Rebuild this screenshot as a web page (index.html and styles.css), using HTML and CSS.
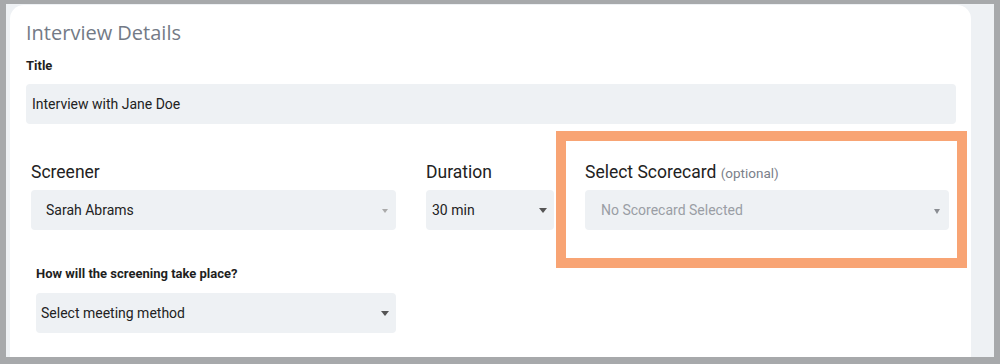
FILE: index.html
```html
<!DOCTYPE html>
<html lang="en">
<head>
    <meta charset="UTF-8">
    <meta name="viewport" content="width=device-width, initial-scale=1.0">
    <title>Interview Details</title>
    <link rel="stylesheet" href="styles.css">
</head>
<body>
    <div class="frame">
        <div class="card">
            <h2 class="card-title">Interview Details</h2>

            <label class="field-label">Title</label>
            <div class="input">Interview with Jane Doe</div>

            <div class="row">
                <div class="col">
                    <label class="big-label">Screener</label>
                    <div class="select screener">Sarah Abrams<span class="caret light"></span></div>
                </div>
                <div class="col">
                    <label class="big-label">Duration</label>
                    <div class="select duration">30 min<span class="caret"></span></div>
                </div>
                <div class="col">
                    <label class="big-label">Select Scorecard <span class="optional">(optional)</span></label>
                    <div class="select scorecard">No Scorecard Selected<span class="caret mid"></span></div>
                </div>
            </div>

            <div class="method">
                <label class="field-label">How will the screening take place?</label>
                <div class="select meeting">Select meeting method<span class="caret"></span></div>
            </div>
        </div>
        <div class="highlight"></div>
    </div>
</body>
</html>
```

FILE: styles.css
```css
body {
    margin: 0;
    background-color: #a7a9ab;
    font-family: Roboto, "Liberation Sans", Arial, sans-serif;
    color: #222;
}
.frame {
    position: relative;
    margin: 4px 6px 6px 6px;
    height: 353px;
    padding: 1px 23px 0 4px;
    box-sizing: border-box;
    background-color: #eef1f4;
    overflow: hidden;
}
.card {
    background-color: white;
    border-radius: 14px 14px 0 0;
    height: 100%;
    padding: 16px 15px 0 16px;
    box-sizing: border-box;
}
.card-title {
    margin: 0 0 13px 0;
    font-family: "Open Sans", sans-serif;
    font-weight: 400;
    font-size: 20px;
    line-height: 24px;
    color: #737a86;
}
.field-label {
    display: block;
    font-size: 13px;
    font-weight: 700;
    line-height: 16px;
    color: #1f1f1f;
    margin-bottom: 10px;
}
.input {
    height: 40px;
    line-height: 40px;
    padding-left: 6px;
    background-color: #eef1f4;
    border-radius: 4px;
    font-size: 14px;
    color: #222;
}
.row {
    display: grid;
    grid-template-columns: 365px 128px 365px;
    column-gap: 30px;
    margin: 37px 0 0 5px;
}
.row .col:last-child {
    margin-left: 1px;
}
.big-label {
    display: block;
    height: 22px;
    font-size: 17.5px;
    line-height: 22px;
    color: #222;
    margin-bottom: 7px;
}
.optional {
    font-size: 13.5px;
    line-height: 1;
    color: #7b808a;
}
.select {
    position: relative;
    height: 40px;
    line-height: 40px;
    background-color: #eef1f4;
    border-radius: 4px;
    font-size: 14px;
    color: #222;
}
.screener { padding-left: 15px; }
.duration { padding-left: 6px; }
.scorecard { padding-left: 16px; color: #9a9ea5; }
.meeting { padding-left: 5px; }
.caret {
    position: absolute;
    right: 7px;
    top: 18px;
    border-left: 4px solid transparent;
    border-right: 4px solid transparent;
    border-top: 5px solid #555;
}
.caret.light {
    right: 8px;
    top: 19px;
    border-left-width: 3px;
    border-right-width: 3px;
    border-top: 4px solid #aaa;
}
.caret.mid {
    right: 9px;
    top: 19px;
    border-left-width: 3px;
    border-right-width: 3px;
    border-top: 5px solid #8a8d92;
}
.method {
    width: 360px;
    margin: 36px 0 0 10px;
}
.method .field-label {
    margin-bottom: 11px;
}
.highlight {
    position: absolute;
    left: 550px;
    top: 127px;
    width: 391px;
    height: 117px;
    border: 10px solid #f8a474;
}
```
